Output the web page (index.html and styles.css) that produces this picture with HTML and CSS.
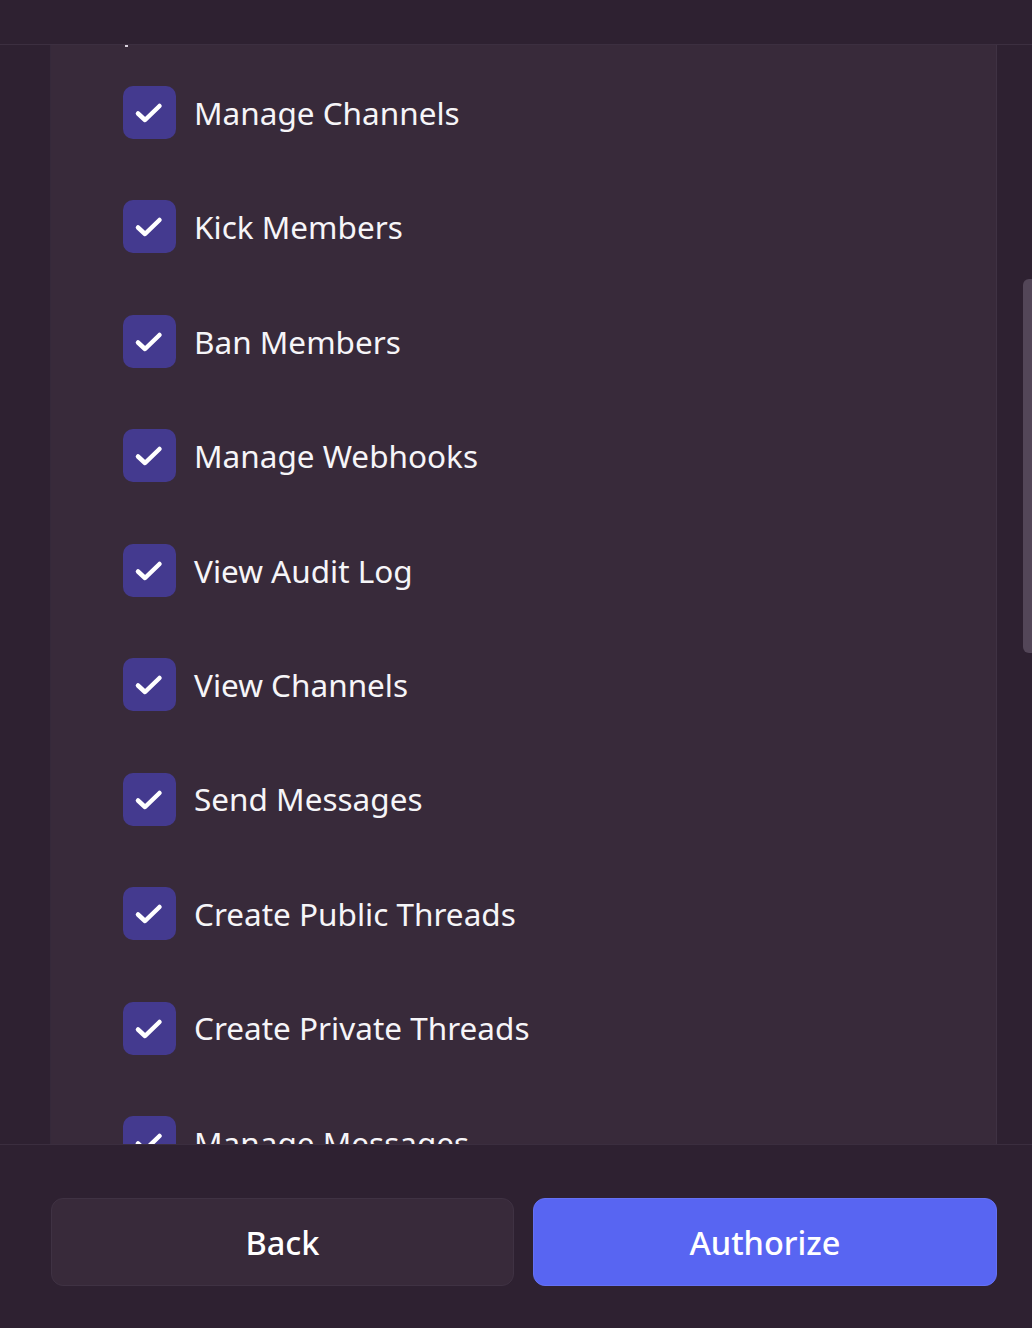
FILE: index.html
```html
<!DOCTYPE html>
<html lang="en">
<head>
<meta charset="utf-8">
<title>Authorize</title>
<link rel="stylesheet" href="styles.css">
</head>
<body>
<div class="app">
  <header class="topbar"></header>
  <main class="main">
    <div class="gutter"></div>
    <section class="panel">
      <div class="list">
        <div class="ghost"><span class="ghost-mark"></span></div>
        <label class="item"><span class="box"><svg viewBox="0 0 53 53" width="53" height="53"><path d="M15 27.5 L22 34 L36.5 20" fill="none" stroke="#fff" stroke-width="4.5" stroke-linecap="round" stroke-linejoin="round"/></svg></span><span class="label">Manage Channels</span></label>
        <label class="item"><span class="box"><svg viewBox="0 0 53 53" width="53" height="53"><path d="M15 27.5 L22 34 L36.5 20" fill="none" stroke="#fff" stroke-width="4.5" stroke-linecap="round" stroke-linejoin="round"/></svg></span><span class="label">Kick Members</span></label>
        <label class="item"><span class="box"><svg viewBox="0 0 53 53" width="53" height="53"><path d="M15 27.5 L22 34 L36.5 20" fill="none" stroke="#fff" stroke-width="4.5" stroke-linecap="round" stroke-linejoin="round"/></svg></span><span class="label">Ban Members</span></label>
        <label class="item"><span class="box"><svg viewBox="0 0 53 53" width="53" height="53"><path d="M15 27.5 L22 34 L36.5 20" fill="none" stroke="#fff" stroke-width="4.5" stroke-linecap="round" stroke-linejoin="round"/></svg></span><span class="label">Manage Webhooks</span></label>
        <label class="item"><span class="box"><svg viewBox="0 0 53 53" width="53" height="53"><path d="M15 27.5 L22 34 L36.5 20" fill="none" stroke="#fff" stroke-width="4.5" stroke-linecap="round" stroke-linejoin="round"/></svg></span><span class="label">View Audit Log</span></label>
        <label class="item"><span class="box"><svg viewBox="0 0 53 53" width="53" height="53"><path d="M15 27.5 L22 34 L36.5 20" fill="none" stroke="#fff" stroke-width="4.5" stroke-linecap="round" stroke-linejoin="round"/></svg></span><span class="label">View Channels</span></label>
        <label class="item"><span class="box"><svg viewBox="0 0 53 53" width="53" height="53"><path d="M15 27.5 L22 34 L36.5 20" fill="none" stroke="#fff" stroke-width="4.5" stroke-linecap="round" stroke-linejoin="round"/></svg></span><span class="label">Send Messages</span></label>
        <label class="item"><span class="box"><svg viewBox="0 0 53 53" width="53" height="53"><path d="M15 27.5 L22 34 L36.5 20" fill="none" stroke="#fff" stroke-width="4.5" stroke-linecap="round" stroke-linejoin="round"/></svg></span><span class="label">Create Public Threads</span></label>
        <label class="item"><span class="box"><svg viewBox="0 0 53 53" width="53" height="53"><path d="M15 27.5 L22 34 L36.5 20" fill="none" stroke="#fff" stroke-width="4.5" stroke-linecap="round" stroke-linejoin="round"/></svg></span><span class="label">Create Private Threads</span></label>
        <label class="item"><span class="box"><svg viewBox="0 0 53 53" width="53" height="53"><path d="M15 27.5 L22 34 L36.5 20" fill="none" stroke="#fff" stroke-width="4.5" stroke-linecap="round" stroke-linejoin="round"/></svg></span><span class="label">Manage Messages</span></label>
      </div>
    </section>
    <div class="rail"><div class="thumb"></div></div>
  </main>
  <footer class="footer">
    <button class="btn btn-back">Back</button>
    <button class="btn btn-primary">Authorize</button>
  </footer>
</div>
</body>
</html>
```

FILE: styles.css
```css
* { box-sizing: border-box; }
html, body { margin: 0; padding: 0; }
body {
  background: #2e2131;
  font-family: "Noto Sans", "Open Sans", sans-serif;
  color: #f2f3f5;
}
.app {
  width: 1032px;
  height: 1328px;
  display: flex;
  flex-direction: column;
  overflow: hidden;
}
.topbar {
  height: 45px;
  flex: none;
  background: #2e2131;
  border-bottom: 1px solid #3c2f40;
}
.main {
  flex: 1;
  display: flex;
  min-height: 0;
  overflow: hidden;
}
.gutter {
  width: 51px;
  flex: none;
  background: #2e2131;
  border-right: 1px solid #35293a;
}
.panel {
  width: 946px;
  flex: none;
  background: #382a3a;
  border-right: 1px solid #3f3243;
  overflow: hidden;
}
.list {
  display: flex;
  flex-direction: column;
  gap: 61.45px;
  padding-left: 72px;
}
.ghost {
  height: 2px;
  margin-bottom: -22.45px;
}
.ghost-mark {
  display: block;
  width: 3px;
  height: 2px;
  margin-left: 2px;
  background: #d8d0dc;
}
.item {
  display: flex;
  align-items: center;
  gap: 18px;
  height: 53px;
}
.box {
  width: 53px;
  height: 53px;
  flex: none;
  border-radius: 10px;
  background: #443a8f;
  display: flex;
}
.label {
  font-size: 31.5px;
  line-height: 1;
  color: #f6f5f8;
  white-space: nowrap;
}
.rail {
  flex: 1;
  position: relative;
  background: #2e2131;
}
.thumb {
  position: absolute;
  right: 0;
  top: 234px;
  width: 9px;
  height: 374px;
  border-radius: 6px 0 0 6px;
  background: #534658;
}
.footer {
  height: 184px;
  flex: none;
  background: #2e2131;
  border-top: 1px solid #3b2e3f;
  display: flex;
  gap: 19px;
  padding: 53px 35px 0 51px;
}
.btn {
  width: 464px;
  height: 88px;
  border-radius: 12px;
  font-family: "Noto Sans", "Open Sans", sans-serif;
  font-size: 32.5px;
  font-weight: 500;
  color: #ffffff;
  cursor: pointer;
}
.btn-back {
  width: 463px;
  background: #382a3a;
  border: 1px solid #3f3243;
}
.btn-primary {
  background: #5865f2;
  border: 1px solid #6571f4;
}
```
